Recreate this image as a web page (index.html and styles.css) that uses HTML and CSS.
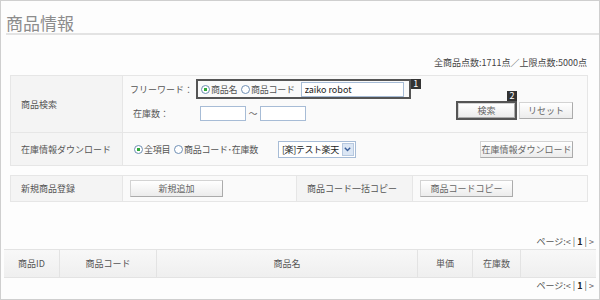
FILE: index.html
```html
<!DOCTYPE html>
<html lang="ja">
<head>
<meta charset="utf-8">
<title>商品情報</title>
<link rel="stylesheet" href="styles.css">
</head>
<body>
<div class="page">
  <h1 class="title">商品情報</h1>
  <div class="total">全商品点数:1711点／上限点数:5000点</div>

  <div class="form-table ft1">
    <div class="th r1">商品検索</div>
    <div class="td r1 search">
      <div class="search-left">
        <div class="line">
          <span class="lbl w1">フリーワード：</span>
          <span class="hl-box">
            <span class="radio on"></span><span class="rtxt">商品名</span>
            <span class="radio"></span><span class="rtxt">商品コード</span>
            <input class="txt kw" type="text" value="zaiko robot">
            <span class="badge b1">1</span>
          </span>
        </div>
        <div class="line line2">
          <span class="lbl w2">在庫数：</span>
          <input class="txt num" type="text">
          <span class="tilde">～</span>
          <input class="txt num" type="text">
        </div>
      </div>
      <div class="search-right">
        <span class="hl-btn">
          <span class="badge b2">2</span>
          <button class="btn b-search">検索</button>
        </span>
        <button class="btn b-reset">リセット</button>
      </div>
    </div>
    <div class="th r2">在庫情報ダウンロード</div>
    <div class="td r2 dl">
      <span class="radio on"></span><span class="rtxt">全項目</span>
      <span class="radio"></span><span class="rtxt">商品コード･在庫数</span>
      <span class="select"><span class="sel-text">[楽]テスト楽天</span><span class="sel-arrow"><svg width="7" height="5" viewBox="0 0 7 5"><path d="M0.8 0.8 L3.5 3.6 L6.2 0.8" fill="none" stroke="#3b5f9a" stroke-width="1.4"/></svg></span></span>
      <span class="spacer"></span>
      <button class="btn b-dl">在庫情報ダウンロード</button>
    </div>
  </div>

  <div class="form-table ft2">
    <div class="th">新規商品登録</div>
    <div class="td"><button class="btn b-wide">新規追加</button></div>
    <div class="th">商品コード一括コピー</div>
    <div class="td"><button class="btn b-wide">商品コードコピー</button></div>
  </div>

  <div class="pager pager-top">ページ:&lt; | <b>1</b> | &gt;</div>
  <div class="list-head">
    <div class="lh c1">商品ID</div>
    <div class="lh c2">商品コード</div>
    <div class="lh c3">商品名</div>
    <div class="lh c4">単価</div>
    <div class="lh c5">在庫数</div>
    <div class="lh c6"></div>
  </div>
  <div class="pager pager-bottom">ページ:&lt; | <b>1</b> | &gt;</div>
</div>
</body>
</html>
```

FILE: styles.css
```css
* { box-sizing: border-box; }
html, body { margin: 0; padding: 0; background: #fdfdfd; }
body {
  font-family: "Noto Sans CJK JP", "DejaVu Sans", sans-serif;
  font-size: 9px;
  color: #555;
}
.page {
  width: 600px;
  height: 300px;
  border: 1px solid #cfcfcf;
  background: #fdfdfd;
  overflow: hidden;
  white-space: nowrap;
}
.title {
  margin: 0 0 0 5px;
  padding-top: 12px;
  height: 34px;
  font-size: 17px;
  line-height: 20px;
  font-weight: normal;
  color: #8c8c8c;
  border-bottom: 2px solid #e3e3e3;
}
.total {
  margin-top: 22px;
  padding-right: 12px;
  text-align: right;
  line-height: 12px;
  height: 12px;
  color: #444;
}
.form-table {
  margin-left: 9px;
  width: 578px;
  display: grid;
  border: 1px solid #e6e6e6;
  background: #fafafa;
}
.ft1 {
  margin-top: 6px;
  grid-template-columns: 112px 1fr;
  grid-template-rows: 57px 32px;
}
.th {
  background: #f4f4f4;
  padding-left: 10px;
  display: flex;
  align-items: center;
  color: #555;
  border-right: 1px solid #e6e6e6;
}
.td { display: flex; align-items: center; }
.r1 { border-bottom: 1px solid #e6e6e6; }
.search {
  align-items: stretch;
  justify-content: space-between;
  padding: 3px 14px 12px 7px;
}
.search-left { display: flex; flex-direction: column; }
.line { display: flex; align-items: center; height: 20px; }
.line2 { margin-top: 7px; height: 14px; }
.lbl { display: inline-block; flex-shrink: 0; }
.w1 { width: 66px; }
.w2 { width: 70px; padding-left: 3px; }
.hl-box {
  position: relative;
  display: flex;
  align-items: center;
  height: 20px;
  border: 2px solid #555;
  padding: 0 5px 0 3px;
}
.radio {
  display: inline-block;
  flex-shrink: 0;
  width: 9px;
  height: 9px;
  border: 1px solid #6f8fb5;
  border-radius: 50%;
  background: #fff;
  margin-right: 1px;
}
.radio.on { background: radial-gradient(circle, #2faa3a 0 1.6px, #fff 2px); }
.rtxt { margin-right: 4px; flex-shrink: 0; letter-spacing: -0.3px; }
.txt {
  flex-shrink: 0;
  height: 15px;
  border: 1px solid #a7bcd6;
  background: #fff;
  font-family: "Noto Sans CJK JP", "DejaVu Sans", sans-serif;
  font-size: 9px;
  color: #222;
  padding: 0 3px;
  outline: none;
}
.kw { width: 103px; margin-left: 2px; }
.num { width: 46px; }
.tilde { width: 14px; text-align: center; color: #666; }
.badge {
  position: absolute;
  width: 10px;
  height: 10px;
  background: #333;
  color: #fff;
  font-size: 9px;
  line-height: 10px;
  text-align: center;
}
.b1 { top: -2px; right: -12px; }
.b2 { top: -12px; right: -2px; }
.search-right { display: flex; align-items: flex-end; }
.hl-btn {
  position: relative;
  display: flex;
  border: 2px solid #555;
  width: 61px;
  height: 19px;
  padding: 0;
}
.btn {
  font-family: "Noto Sans CJK JP", "DejaVu Sans", sans-serif;
  font-size: 9px;
  color: #666;
  background: linear-gradient(#ffffff, #ececec);
  border: 1px solid #d3d3d3;
  border-right-color: #ababab;
  border-bottom-color: #ababab;
  padding: 0;
  margin: 0;
  line-height: 1;
  white-space: nowrap;
}
.b-search { width: 100%; height: 100%; }
.b-reset { width: 54px; height: 17px; margin-left: 2px; margin-bottom: 1px; }
.dl { padding: 0 14px 0 11px; }
.select {
  display: flex;
  flex-shrink: 0;
  align-items: center;
  margin-left: 16px;
  width: 78px;
  height: 17px;
  border: 1px solid #a7bcd6;
  background: #fff;
  color: #222;
  padding-left: 3px;
}
.sel-text { flex: 1; white-space: nowrap; letter-spacing: -0.4px; }
.sel-arrow {
  flex-shrink: 0;
  width: 12px;
  height: 13px;
  margin-right: 1px;
  background: #dbe6f4;
  border: 1px solid #b6c8df;
  display: flex;
  align-items: center;
  justify-content: center;
}
.spacer { flex: 1; }
.b-dl { width: 93px; height: 17px; }
.ft2 {
  margin-top: 9px;
  grid-template-columns: 112px 174px 116px 1fr;
  height: 27px;
}
.ft2 .td { padding-left: 7px; border-right: 1px solid #e6e6e6; }
.ft2 .td:last-child { border-right: none; }
.b-wide { width: 93px; height: 17px; }
.pager {
  text-align: right;
  padding-right: 5px;
  color: #555;
  line-height: 12px;
  height: 12px;
}
.pager b { color: #222; }
.pager-top { margin-top: 34px; }
.list-head {
  margin: 1px 0 0 3px;
  width: 592px;
  height: 29px;
  display: grid;
  grid-template-columns: 56px 97px 261px 55px 48px 1fr;
  border-top: 1px solid #e3e3e3;
  border-bottom: 1px solid #e3e3e3;
  background: linear-gradient(#f8f8f8, #efefef);
}
.lh {
  display: flex;
  align-items: center;
  justify-content: center;
  border-right: 1px solid #e3e3e3;
  color: #555;
}
.lh.c6 { border-right: none; }
.pager-bottom { margin-top: 2px; }
```
